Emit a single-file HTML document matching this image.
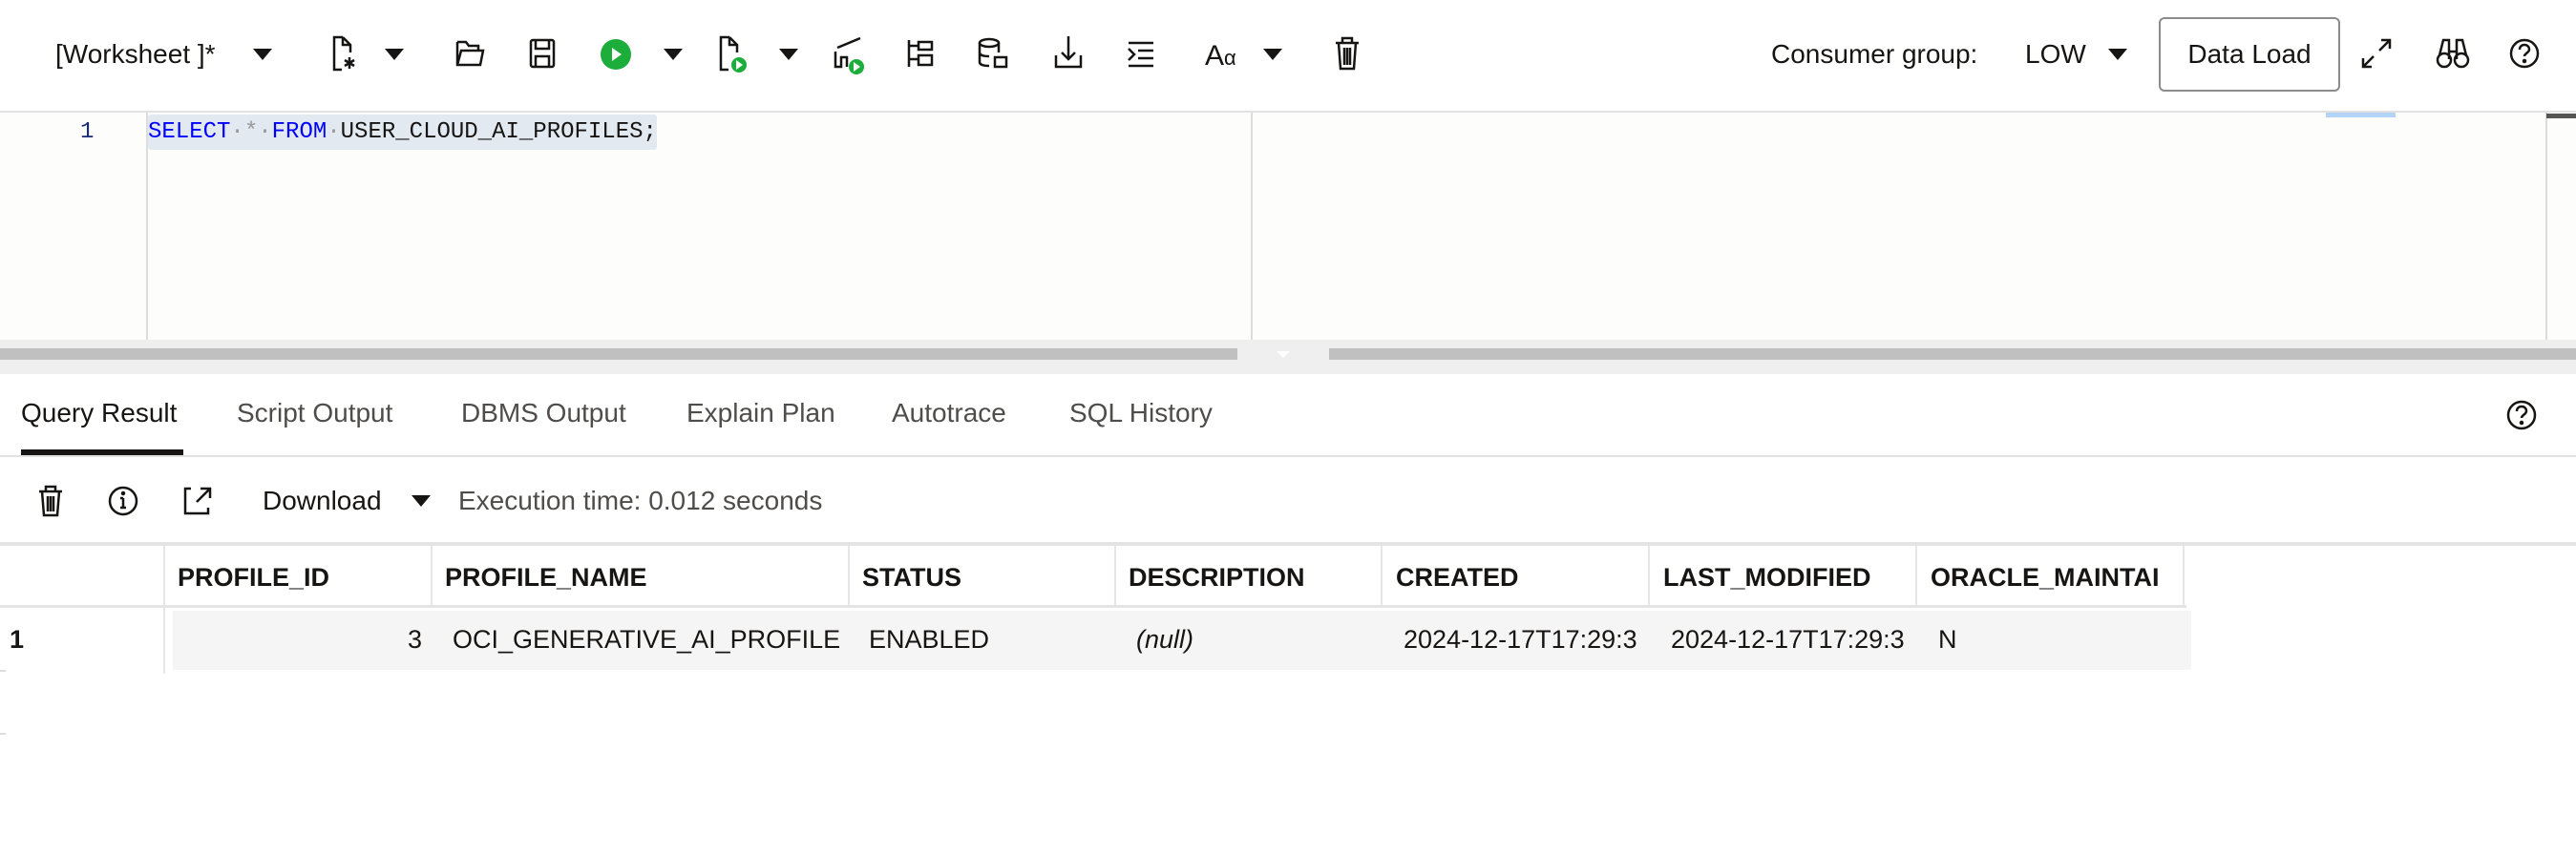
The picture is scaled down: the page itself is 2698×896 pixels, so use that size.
<!DOCTYPE html>
<html><head><meta charset="utf-8"><style>
body{margin:0;width:2698px;height:896px;background:#fff;position:relative;overflow:hidden;font-family:"Liberation Sans",sans-serif;color:#161513}
.a{position:absolute;white-space:nowrap}
.t{font-size:28px;line-height:30px}
.tri{position:absolute;width:0;height:0;border-left:10px solid transparent;border-right:10px solid transparent;border-top:12px solid #161513}
svg.i{position:absolute;overflow:visible}
.hd{font-weight:bold;font-size:27px;top:590px}
.cl{position:absolute;top:572px;width:2px;height:64px;background:#e6e6e6}
.rv{font-size:27px;top:655px}
</style></head><body>
<div class="a t" style="left:58px;top:42px">[Worksheet ]*</div>
<div class="tri" style="left:265px;top:51px"></div>
<svg class="i" style="left:347px;top:38px" width="30" height="38" fill="none" stroke="#161513" stroke-width="2.5"><path d="M12 1H3v34h8M12 1l8 8v8M12 1v8h8"/><path d="M19 22v12M14 25l10 6M24 25l-10 6"/></svg>
<div class="tri" style="left:403px;top:51px"></div>
<svg class="i" style="left:477px;top:42px" width="30" height="28" fill="none" stroke="#161513" stroke-width="2.5"><path d="M2 2h9l3 4h10v5M2 2v24h24l3-15H6L2 26"/></svg>
<svg class="i" style="left:554px;top:40px" width="28" height="32" fill="none" stroke="#161513" stroke-width="2.5"><rect x="2" y="2" width="24" height="28" rx="2"/><path d="M7 2v9h14V2M7 30V19h14v11"/></svg>
<svg class="i" style="left:628px;top:40px" width="34" height="34"><circle cx="17" cy="17" r="16" fill="#1cad3b"/><path d="M13 10l10 7-10 7z" fill="#fff"/></svg>
<div class="tri" style="left:695px;top:51px"></div>
<svg class="i" style="left:752px;top:38px" width="34" height="40" fill="none" stroke="#161513" stroke-width="2.5"><path d="M12 1H3v34h8M12 1l8 8v8M12 1v8h8"/><circle cx="22" cy="30" r="8" fill="#1cad3b" stroke="none"/><path d="M19 25l7 5-7 5z" fill="#fff" stroke="none"/></svg>
<div class="tri" style="left:816px;top:51px"></div>
<svg class="i" style="left:873px;top:40px" width="34" height="38" fill="none" stroke="#161513" stroke-width="2.5"><path d="M2 14v16h6V20h6v10M4 10L28 0"/><circle cx="24" cy="30" r="8" fill="#1cad3b" stroke="none"/><path d="M21 25l7 5-7 5z" fill="#fff" stroke="none"/></svg>
<svg class="i" style="left:950px;top:42px" width="30" height="30" fill="none" stroke="#161513" stroke-width="2.5"><path d="M2 0v28M2 6h10M2 20h10"/><rect x="12" y="2" width="14" height="8"/><rect x="12" y="16" width="14" height="10"/></svg>
<svg class="i" style="left:1024px;top:40px" width="34" height="34" fill="none" stroke="#161513" stroke-width="2.5"><ellipse cx="12" cy="5" rx="10" ry="4"/><path d="M2 5v20c0 3 5 4 10 4M22 5v10M2 15c0 3 5 4 10 4"/><rect x="18" y="20" width="12" height="10"/></svg>
<svg class="i" style="left:1104px;top:38px" width="30" height="34" fill="none" stroke="#161513" stroke-width="2.5"><path d="M15 0v24M8 17l7 7 7-7M2 20v12h26V20"/></svg>
<svg class="i" style="left:1180px;top:44px" width="30" height="26" fill="none" stroke="#161513" stroke-width="2.5"><path d="M2 1h26M2 25h26M12 9h16M12 17h16M2 7l6 6-6 6"/></svg>
<div class="a" style="left:1262px;top:42px;font-size:30px">A<span style="font-size:22px">α</span></div>
<div class="tri" style="left:1323px;top:51px"></div>
<svg class="i" style="left:1398px;top:38px" width="26" height="36" fill="none" stroke="#161513" stroke-width="2.5"><path d="M1 7h24M8 7V2h10v5M4 7l2 27h14l2-27M10 12v18M13 12v18M16 12v18"/></svg>
<div class="a t" style="left:1855px;top:42px">Consumer group:</div>
<div class="a t" style="left:2121px;top:42px">LOW</div>
<div class="tri" style="left:2208px;top:51px"></div>
<div class="a" style="left:2261px;top:18px;width:186px;height:74px;border:2px solid #8c8c8c;border-radius:6px;font-size:28px;line-height:74px;text-align:center">Data Load</div>
<svg class="i" style="left:2474px;top:41px" width="30" height="30" fill="none" stroke="#161513" stroke-width="2.5"><path d="M18 12L29 1M20 1h9v9M12 18L1 29M1 20v9h9"/></svg>
<svg class="i" style="left:2552px;top:40px" width="34" height="32" fill="none" stroke="#161513" stroke-width="2.5"><circle cx="8" cy="23" r="7"/><circle cx="26" cy="23" r="7"/><path d="M3 18L7 2h6v20M31 18L27 2h-6v20M13 14h8"/></svg>
<svg class="i" style="left:2628px;top:40px" width="32" height="32" fill="none" stroke="#161513" stroke-width="2.5"><circle cx="16" cy="16" r="14"/><path d="M11 12c0-3 2-5 5-5s5 2 5 5-5 4-5 7"/><circle cx="16" cy="24" r="1" fill="#161513"/></svg>
<div class="a" style="left:0;top:116px;width:2698px;height:2px;background:#e2e2e2"></div>
<div class="a" style="left:0;top:118px;width:2698px;height:238px;background:#fdfdfb"></div>
<div class="a" style="left:153px;top:118px;width:2px;height:238px;background:#dcdcdc"></div>
<div class="a" style="left:1310px;top:118px;width:2px;height:238px;background:#dcdcdc"></div>
<div class="a" style="left:2666px;top:118px;width:2px;height:238px;background:#dcdcdc"></div>
<div class="a" style="left:2667px;top:119px;width:31px;height:5px;background:#555"></div>
<div class="a" style="left:2436px;top:118px;width:73px;height:5px;background:#b3d4f7"></div>
<div class="a" style="left:84px;top:125px;font-family:'Liberation Mono',monospace;font-size:24px;color:#1a2a7a">1</div>
<div class="a" style="left:155px;top:120px;width:533px;height:37px;background:#e3e9f1;border-radius:3px"></div>
<div class="a" style="left:155px;top:125px;font-family:'Liberation Mono',monospace;font-size:24px;line-height:28px"><span style="color:#0000ff">SELECT</span><span style="color:#999">·*·</span><span style="color:#0000ff">FROM</span><span style="color:#999">·</span>USER_CLOUD_AI_PROFILES;</div>
<div class="a" style="left:0;top:356px;width:2698px;height:36px;background:#efefef"></div>
<div class="a" style="left:0;top:365px;width:1296px;height:12px;background:#c0c0c0"></div>
<div class="a" style="left:1392px;top:365px;width:1306px;height:12px;background:#c0c0c0"></div>
<div class="a" style="left:1337px;top:368px;width:0;height:0;border-left:7px solid transparent;border-right:7px solid transparent;border-top:7px solid #fff"></div>
<div class="a t" style="left:22px;top:418px">Query Result</div>
<div class="a t" style="left:248px;top:418px;color:#4f4d4b">Script Output</div>
<div class="a t" style="left:483px;top:418px;color:#4f4d4b">DBMS Output</div>
<div class="a t" style="left:719px;top:418px;color:#4f4d4b">Explain Plan</div>
<div class="a t" style="left:934px;top:418px;color:#4f4d4b">Autotrace</div>
<div class="a t" style="left:1120px;top:418px;color:#4f4d4b">SQL History</div>
<div class="a" style="left:22px;top:471px;width:170px;height:6px;background:#161513"></div>
<div class="a" style="left:0;top:477px;width:2698px;height:2px;background:#e2e2e2"></div>
<svg class="i" style="left:2625px;top:419px" width="32" height="32" fill="none" stroke="#161513" stroke-width="2.5"><circle cx="16" cy="16" r="14"/><path d="M11 12c0-3 2-5 5-5s5 2 5 5-5 4-5 7"/><circle cx="16" cy="24" r="1" fill="#161513"/></svg>
<svg class="i" style="left:40px;top:508px" width="26" height="34" fill="none" stroke="#161513" stroke-width="2.5"><path d="M1 7h24M8 7V2h10v5M4 7l2 25h14l2-25M10 12v16M13 12v16M16 12v16"/></svg>
<svg class="i" style="left:113px;top:509px" width="32" height="32" fill="none" stroke="#161513" stroke-width="2.5"><circle cx="16" cy="16" r="14"/><path d="M16 13v10M13 13h3M13 23h6"/><circle cx="16" cy="8" r="1" fill="#161513"/></svg>
<svg class="i" style="left:192px;top:510px" width="30" height="30" fill="none" stroke="#161513" stroke-width="2.5"><path d="M8 2H2v26h24v-6M14 16L27 3M18 2h10v10"/></svg>
<div class="a t" style="left:275px;top:510px">Download</div>
<div class="tri" style="left:431px;top:519px"></div>
<div class="a t" style="left:480px;top:510px;color:#4f4d4b">Execution time: 0.012 seconds</div>
<div class="a" style="left:0;top:568px;width:2698px;height:4px;background:#e4e4e4"></div>
<div class="cl" style="left:171px;height:134px"></div><div class="cl" style="left:451px"></div><div class="cl" style="left:888px"></div><div class="cl" style="left:1167px"></div><div class="cl" style="left:1446px"></div><div class="cl" style="left:1726px"></div><div class="cl" style="left:2006px"></div><div class="cl" style="left:2286px"></div>
<div class="a" style="left:0;top:634px;width:2290px;height:3px;background:#e4e4e4"></div>
<div class="a hd" style="left:186px">PROFILE_ID</div>
<div class="a hd" style="left:466px">PROFILE_NAME</div>
<div class="a hd" style="left:903px">STATUS</div>
<div class="a hd" style="left:1182px">DESCRIPTION</div>
<div class="a hd" style="left:1462px">CREATED</div>
<div class="a hd" style="left:1742px">LAST_MODIFIED</div>
<div class="a hd" style="left:2022px">ORACLE_MAINTAI</div>
<div class="a" style="left:181px;top:640px;width:2114px;height:62px;background:#f5f5f5"></div>
<div class="a rv" style="left:10px;font-weight:bold">1</div>
<div class="a rv" style="left:427px">3</div>
<div class="a rv" style="left:474px">OCI_GENERATIVE_AI_PROFILE</div>
<div class="a rv" style="left:910px">ENABLED</div>
<div class="a rv" style="left:1190px;font-style:italic">(null)</div>
<div class="a rv" style="left:1470px">2024-12-17T17:29:3</div>
<div class="a rv" style="left:1750px">2024-12-17T17:29:3</div>
<div class="a rv" style="left:2030px">N</div>
<div class="a" style="left:0;top:702px;width:6px;height:2px;background:#ddd"></div>
<div class="a" style="left:0;top:768px;width:6px;height:2px;background:#ddd"></div>
</body></html>
